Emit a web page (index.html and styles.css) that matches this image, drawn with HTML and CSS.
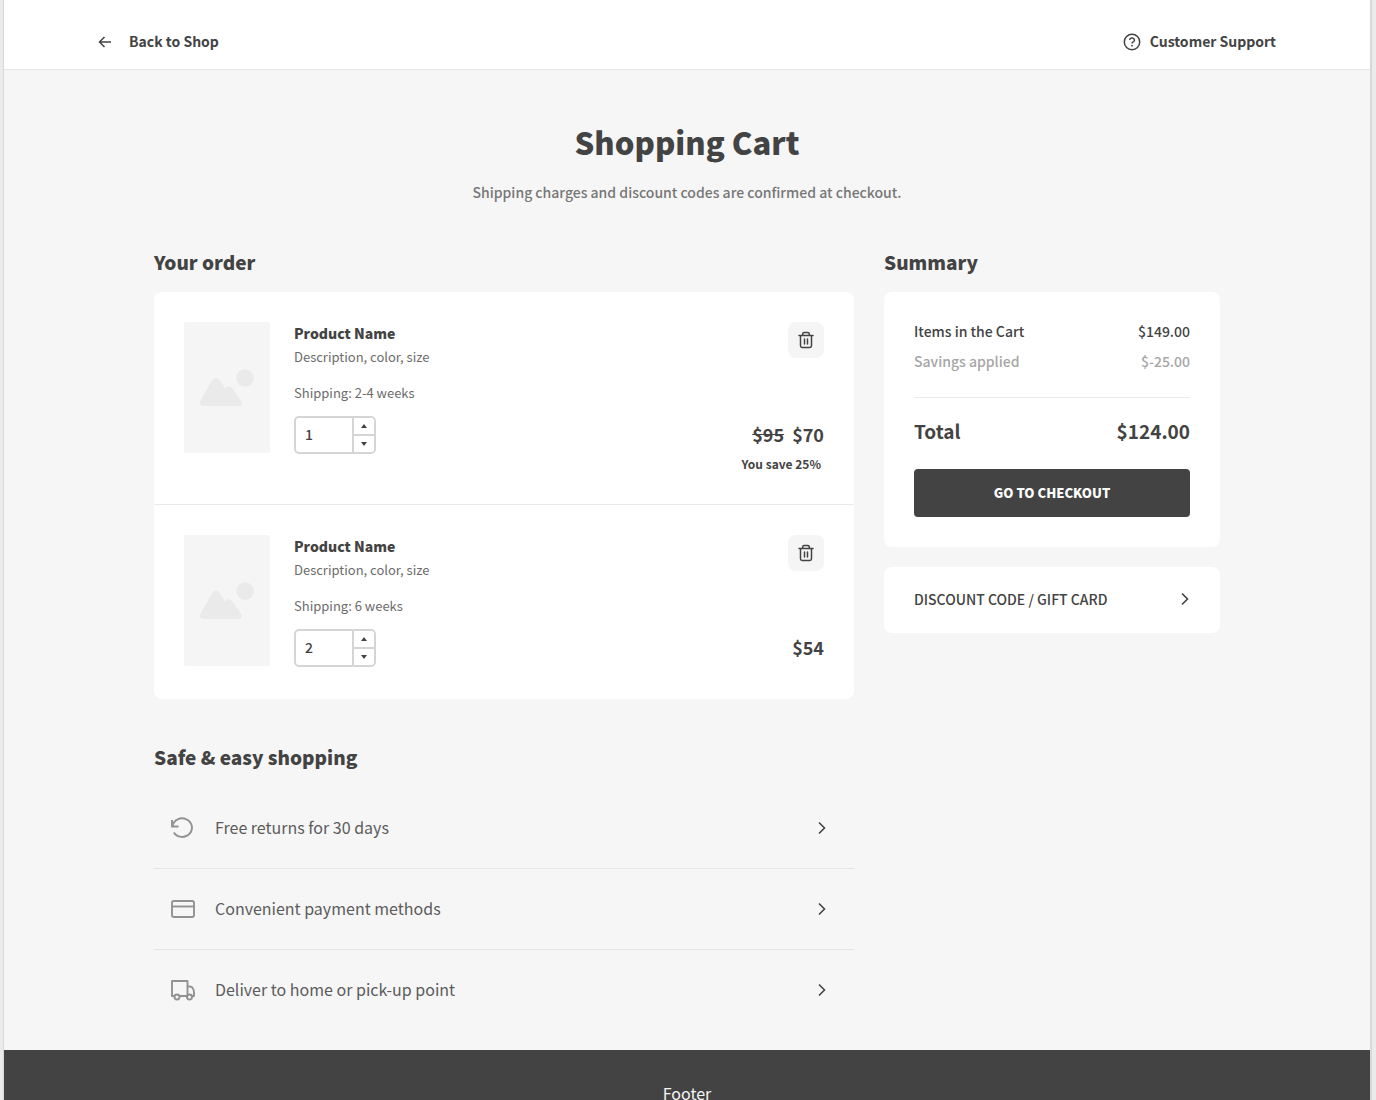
FILE: index.html
```html
<!DOCTYPE html>
<html lang="en">
<head>
<meta charset="utf-8">
<meta name="viewport" content="width=device-width, initial-scale=1">
<title>Shopping Cart</title>
<link rel="stylesheet" href="styles.css">
</head>
<body>
<svg class="sprite" aria-hidden="true">
  <symbol id="chevron" viewBox="0 0 12 16"><path d="M3 2.500 8.500 8 3 13.500" fill="none" stroke="currentColor" stroke-width="1.600"/></symbol>
  <symbol id="trash" viewBox="0 0 18 20"><g fill="none" stroke="currentColor" stroke-width="1.500" stroke-linecap="round" stroke-linejoin="round"><path d="M2 5.500h14M3.500 5.500v10.300q0 1.700 1.700 1.700h7.600q1.700 0 1.700-1.700V5.500M5.700 5.300V4q0-1.500 1.500-1.500h3.600q1.500 0 1.500 1.500v1.300M7.500 9v5M10.500 9v5"/></g></symbol>
  <symbol id="picture" viewBox="0 0 54 38"><path d="M4 37q-6 0-3-6L11.500 12q4.500-7 9 0l4.500 7.500q4-5 7.500 0L41 32q2.500 5-2.500 5z" fill="currentColor"/><circle cx="45" cy="9" r="8.700" fill="currentColor"/></symbol>
  <symbol id="up" viewBox="0 0 6 4"><path d="M3 0 6 4H0z" fill="currentColor"/></symbol>
  <symbol id="down" viewBox="0 0 6 4"><path d="M0 0h6L3 4z" fill="currentColor"/></symbol>
</svg>
<div class="shell">
  <header class="topbar">
    <a class="topbar-link back" href="#">
      <svg class="icon-arrow" viewBox="0 0 14 14" aria-hidden="true"><path d="M13 7H1.500M6.500 2l-5 5 5 5" fill="none" stroke="currentColor" stroke-width="1.500"/></svg>
      Back to Shop
    </a>
    <a class="topbar-link support" href="#">
      <svg class="icon-help" viewBox="0 0 18 18" aria-hidden="true"><circle cx="9" cy="9" r="7.700" fill="none" stroke="currentColor" stroke-width="1.500"/><path d="M6.600 7.100a2.400 2.100 0 1 1 3.600 1.800Q9 9.500 9 10.500" fill="none" stroke="currentColor" stroke-width="1.400"/><circle cx="9" cy="12.700" r=".9" fill="currentColor"/></svg>
      Customer Support
    </a>
  </header>

  <main class="content">
    <h1 class="title">Shopping Cart</h1>
    <p class="subtitle">Shipping charges and discount codes are confirmed at checkout.</p>

    <div class="columns">
      <div class="primary">
        <section>
          <h2 class="heading">Your order</h2>
          <ul class="card order">
            <li class="item">
              <div class="thumb"><svg class="icon-picture" aria-hidden="true"><use href="#picture"/></svg></div>
              <div class="details">
                <h3 class="name">Product Name</h3>
                <p class="meta">Description, color, size</p>
                <p class="meta shipping">Shipping: 2-4 weeks</p>
                <div class="quantity">
                  <input class="quantity-input" type="number" value="1" min="1" aria-label="Quantity of the first product">
                  <div class="steps">
                    <button class="step" type="button" aria-label="Increase"><svg class="icon-step"><use href="#up"/></svg></button>
                    <button class="step" type="button" aria-label="Decrease"><svg class="icon-step"><use href="#down"/></svg></button>
                  </div>
                </div>
              </div>
              <div class="side">
                <button class="remove" type="button" aria-label="Remove"><svg class="icon-trash"><use href="#trash"/></svg></button>
                <p class="price"><s>$95</s><span>$70</span></p>
                <p class="saving">You save 25%</p>
              </div>
            </li>
            <li class="item">
              <div class="thumb"><svg class="icon-picture" aria-hidden="true"><use href="#picture"/></svg></div>
              <div class="details">
                <h3 class="name">Product Name</h3>
                <p class="meta">Description, color, size</p>
                <p class="meta shipping">Shipping: 6 weeks</p>
                <div class="quantity">
                  <input class="quantity-input" type="number" value="2" min="1" aria-label="Quantity of the second product">
                  <div class="steps">
                    <button class="step" type="button" aria-label="Increase"><svg class="icon-step"><use href="#up"/></svg></button>
                    <button class="step" type="button" aria-label="Decrease"><svg class="icon-step"><use href="#down"/></svg></button>
                  </div>
                </div>
              </div>
              <div class="side">
                <button class="remove" type="button" aria-label="Remove"><svg class="icon-trash"><use href="#trash"/></svg></button>
                <p class="price"><span>$54</span></p>
              </div>
            </li>
          </ul>
        </section>

        <section class="benefits">
          <h2 class="heading">Safe &amp; easy shopping</h2>
          <a class="benefit" href="#">
            <svg class="icon-benefit" viewBox="0 0 26 26" aria-hidden="true"><path d="M2 5v6.500h6.500M2.500 11A9.800 9.300 0 1 1 3.800 17.500" fill="none" stroke="currentColor" stroke-width="1.900"/></svg>
            <span class="benefit-label">Free returns for 30 days</span>
            <svg class="icon-chevron" aria-hidden="true"><use href="#chevron"/></svg>
          </a>
          <a class="benefit" href="#">
            <svg class="icon-benefit" viewBox="0 0 26 26" aria-hidden="true"><g fill="none" stroke="currentColor" stroke-width="1.900"><rect x="2" y="5" width="22" height="16" rx="2"/><path d="M2 10.500h22"/></g></svg>
            <span class="benefit-label">Convenient payment methods</span>
            <svg class="icon-chevron" aria-hidden="true"><use href="#chevron"/></svg>
          </a>
          <a class="benefit" href="#">
            <svg class="icon-benefit" viewBox="0 0 26 26" aria-hidden="true"><g fill="none" stroke="currentColor" stroke-width="1.900" stroke-linejoin="round"><path d="M4 19H2V4h15.500v15H10M17.500 9.500H20q2.200 0 3.100 2.200.9 2 .9 4V19h-2"/><circle cx="7" cy="20" r="2.500"/><circle cx="19.500" cy="20" r="2.500"/></g></svg>
            <span class="benefit-label">Deliver to home or pick-up point</span>
            <svg class="icon-chevron" aria-hidden="true"><use href="#chevron"/></svg>
          </a>
        </section>
      </div>

      <aside>
        <h2 class="heading">Summary</h2>
        <div class="card summary">
          <dl class="lines">
            <div class="line"><dt>Items in the Cart</dt><dd>$149.00</dd></div>
            <div class="line muted"><dt>Savings applied</dt><dd>$-25.00</dd></div>
            <div class="line total"><dt>Total</dt><dd>$124.00</dd></div>
          </dl>
          <button class="checkout" type="button">GO TO CHECKOUT</button>
        </div>
        <button class="card discount" type="button">
          DISCOUNT CODE / GIFT CARD
          <svg class="icon-chevron" aria-hidden="true"><use href="#chevron"/></svg>
        </button>
      </aside>
    </div>
  </main>

  <footer class="footer">Footer</footer>
</div>
</body>
</html>
```
FILE: styles.css
```css
* { box-sizing: border-box; }

body {
  margin: 0;
  background: #ebebeb;
  color: #434343;
  font: 500 14px/24px "Noto Sans CJK SC", "Noto Sans", sans-serif;
}

h1, h2, h3, p, ul, dl, dd { margin: 0; }
ul { padding: 0; list-style: none; }
a { color: inherit; text-decoration: none; }
button, input { font: inherit; color: inherit; }
button { padding: 0; border: 0; cursor: pointer; }
svg { display: block; flex: none; }
.sprite { display: none; }

.shell {
  margin: 0 4px 0 3px;
  border: solid #d8d8d8;
  border-width: 0 2px 0 1px;
  background: #f6f6f6;
}

.topbar {
  display: flex;
  justify-content: space-between;
  padding: 29px 94px 16px;
  border-bottom: 1px solid #e6e6e6;
  background: #fff;
}
.topbar-link { display: flex; align-items: center; font-weight: 700; }
.topbar-link svg { margin-top: 2px; }
.back { gap: 17px; }
.support { gap: 9px; }
.icon-arrow { width: 14px; height: 14px; }
.icon-help { width: 18px; height: 18px; }

.content { max-width: 1066px; margin: 0 auto; padding: 48px 0 20px; }
.title { font-size: 31px; line-height: 48px; font-weight: 900; text-align: center; }
.subtitle { margin-top: 14px; color: #777; text-align: center; }

.columns {
  display: grid;
  grid-template-columns: minmax(0, 700fr) minmax(0, 336fr);
  gap: 30px;
  margin-top: 42px;
}
.heading { margin-bottom: 14px; font-size: 19px; line-height: 32px; font-weight: 900; }
.card { border-radius: 8px; background: #fff; }

.item { display: flex; padding: 30px 30px 32px; }
.item + .item { border-top: 1px solid #ebebeb; }
.thumb {
  display: grid;
  place-items: center;
  width: 86px;
  height: 131px;
  border-radius: 2px;
  background: #f5f5f5;
  color: #eaeaea;
}
.icon-picture { width: 54px; height: 38px; }
.details { flex: 1; padding-left: 24px; }
.name { margin-bottom: 2px; font-size: 14px; line-height: 22px; font-weight: 900; }
.meta { font-size: 13px; line-height: 22px; font-weight: 400; color: #6c6c6c; }
.shipping { margin-top: 14px; }
.quantity {
  display: flex;
  width: 82px;
  height: 38px;
  margin-top: 12px;
  border: 2px solid #d5d5d5;
  border-radius: 5px;
  overflow: hidden;
}
.quantity-input {
  flex: 1;
  min-width: 0;
  padding: 0 9px 2px;
  border: 0;
  background: none;
  appearance: textfield;
}
.quantity-input::-webkit-inner-spin-button { appearance: none; margin: 0; }
.steps { display: flex; flex-direction: column; width: 22px; border-left: 2px solid #d5d5d5; }
.step { display: grid; place-items: center; flex: 1; background: #fff; }
.step + .step { border-top: 2px solid #d5d5d5; }
.icon-step { width: 6px; height: 4px; }

.side { display: flex; flex-direction: column; align-items: flex-end; }
.remove {
  display: grid;
  place-items: center;
  width: 36px;
  height: 36px;
  border-radius: 8px;
  background: #f5f5f5;
}
.icon-trash { width: 18px; height: 20px; }
.price { display: flex; gap: 8px; margin-top: 64px; font-size: 18px; font-weight: 700; }
.saving { margin-top: 10px; padding-right: 3px; font-size: 12px; line-height: 16px; font-weight: 700; }

.benefits { margin-top: 42px; }
.benefit {
  display: flex;
  align-items: center;
  gap: 19px;
  height: 81px;
  padding: 0 26px 0 16px;
  color: #5c5c5c;
  font-size: 16px;
  font-weight: 400;
}
.benefit + .benefit { border-top: 1px solid #e6e6e6; }
.icon-benefit { width: 26px; height: 26px; color: #929292; }
.benefit-label { flex: 1; padding-bottom: 2px; }
.icon-chevron { width: 12px; height: 16px; color: #434343; }

.summary { padding: 30px; }
.line { display: flex; justify-content: space-between; line-height: 18px; }
.muted { margin-top: 12px; color: #a6a6a6; }
.total {
  margin-top: 27px;
  padding-top: 21px;
  border-top: 1px solid #ebebeb;
  font-size: 19px;
  line-height: 24px;
  font-weight: 700;
}
.checkout {
  width: 100%;
  height: 48px;
  margin-top: 26px;
  border-radius: 4px;
  background: #434343;
  color: #fff;
  font-size: 13px;
  font-weight: 900;
}
.discount {
  display: flex;
  align-items: center;
  justify-content: space-between;
  width: 100%;
  height: 66px;
  margin-top: 20px;
  padding: 0 29px 2px 30px;
}

.footer { padding: 31px; background: #434343; color: #f5f5f5; font-size: 16px; font-weight: 400; text-align: center; }
```
